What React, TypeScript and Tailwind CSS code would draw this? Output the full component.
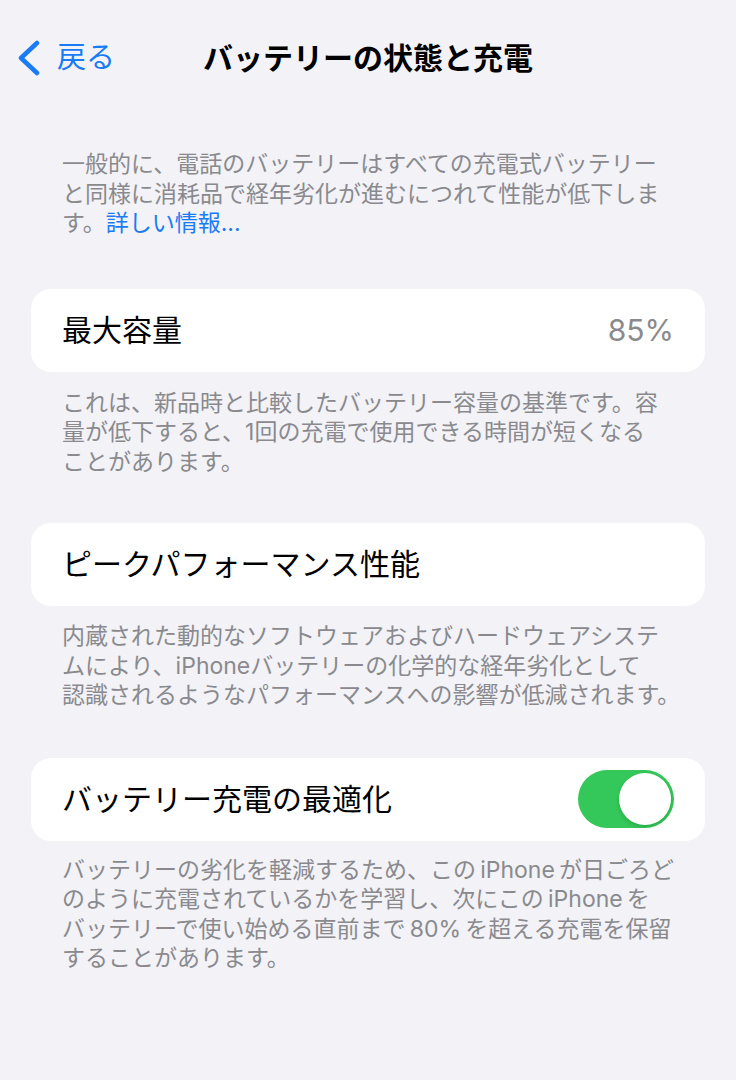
import React from "react";

// ─── Pieces ──────────────────────────────────────────

function BackChevron() {
  return (
    <svg width="24" height="36" viewBox="0 0 24 36" fill="none">
      <path
        d="M20 3 L4 18 L20 33"
        stroke="#1a7cf5"
        strokeWidth="4.5"
        strokeLinecap="round"
        strokeLinejoin="round"
      />
    </svg>
  );
}

function Toggle() {
  return (
    <div className="flex h-[58px] w-[96px] items-center justify-end rounded-full bg-[#34c759] p-[3px]">
      <div className="h-[52px] w-[52px] rounded-full bg-white shadow-[0_2px_4px_rgba(0,0,0,0.15)]" />
    </div>
  );
}

function Card({ children }: { children: React.ReactNode }) {
  return (
    <div className="mx-[31px] flex h-[83px] items-center justify-between rounded-[20px] bg-white px-[31px]">
      {children}
    </div>
  );
}

function Footnote({ lines, className = "" }: { lines: React.ReactNode[]; className?: string }) {
  return (
    <div className={`pl-[62px] text-[23px] leading-[29.5px] whitespace-nowrap text-[#8a8a8e] ${className}`}>
      {lines.map((l, i) => (
        <div key={i}>{l}</div>
      ))}
    </div>
  );
}

// ─── Page ────────────────────────────────────────────

export default function App() {
  return (
    <div
      className="min-h-screen bg-[#f2f2f7] pt-[28px] pb-10"
      style={{ fontFamily: 'Inter, "Noto Sans CJK JP", sans-serif' }}
    >
      <div className="grid h-[60px] grid-cols-[1fr_auto_1fr] items-center">
        <div className="flex items-center gap-[16px] pl-[17px]">
          <BackChevron />
          <span className="text-[29px] text-[#1a7cf5]">戻る</span>
        </div>
        <h1 className="text-[30px] font-bold text-black">バッテリーの状態と充電</h1>
        <div />
      </div>

      <Footnote
        className="mt-[62px]"
        lines={[
          "一般的に、電話のバッテリーはすべての充電式バッテリー",
          "と同様に消耗品で経年劣化が進むにつれて性能が低下しま",
          <>
            す。<span className="text-[#1a7cf5]">詳しい情報...</span>
          </>,
        ]}
      />

      <div className="mt-[50px]">
        <Card>
          <span className="text-[30px] text-black">最大容量</span>
          <span className="text-[30px] text-[#8a8a8e]">85%</span>
        </Card>
      </div>
      <Footnote
        className="mt-[17px]"
        lines={[
          "これは、新品時と比較したバッテリー容量の基準です。容",
          "量が低下すると、1回の充電で使用できる時間が短くなる",
          "ことがあります。",
        ]}
      />

      <div className="mt-[46px]">
        <Card>
          <span className="text-[30px] text-black">ピークパフォーマンス性能</span>
        </Card>
      </div>
      <Footnote
        className="mt-[16px]"
        lines={[
          "内蔵された動的なソフトウェアおよびハードウェアシステ",
          "ムにより、iPhoneバッテリーの化学的な経年劣化として",
          "認識されるようなパフォーマンスへの影響が低減されます。",
        ]}
      />

      <div className="mt-[47px]">
        <Card>
          <span className="text-[30px] text-black">バッテリー充電の最適化</span>
          <Toggle />
        </Card>
      </div>
      <Footnote
        className="mt-[15px]"
        lines={[
          "バッテリーの劣化を軽減するため、この\u2009iPhone\u2009が日ごろど",
          "のように充電されているかを学習し、次にこの\u2009iPhone\u2009を",
          "バッテリーで使い始める直前まで\u200980%\u2009を超える充電を保留",
          "することがあります。",
        ]}
      />
    </div>
  );
}
